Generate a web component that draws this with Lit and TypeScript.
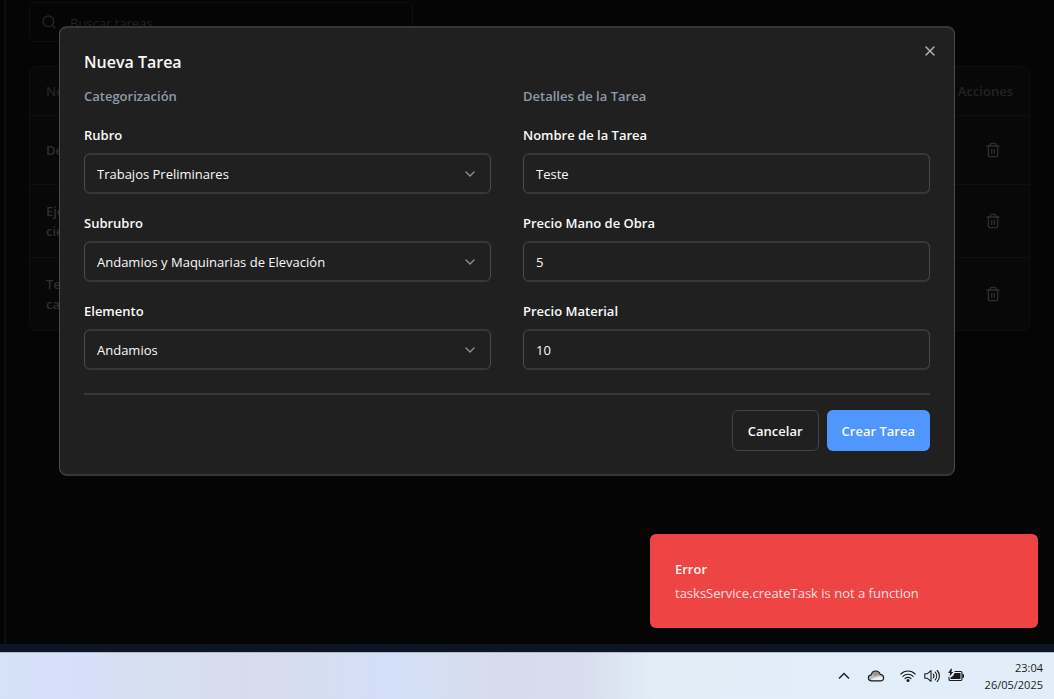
import { LitElement, html, css, svg } from "lit";
import { customElement } from "lit/decorators.js";

interface Choice {
  id: string;
  label: string;
  value: string;
}

const CATEGORIES: Choice[] = [
  { id: "rubro", label: "Rubro", value: "Trabajos Preliminares" },
  { id: "subrubro", label: "Subrubro", value: "Andamios y Maquinarias de Elevación" },
  { id: "elemento", label: "Elemento", value: "Andamios" },
];

const DETAILS: Choice[] = [
  { id: "nombre", label: "Nombre de la Tarea", value: "Teste" },
  { id: "mano-obra", label: "Precio Mano de Obra", value: "5" },
  { id: "material", label: "Precio Material", value: "10" },
];

const ROWS: string[][] = [["De"], ["Eje", "cie"], ["Te", "ca"]];

const lucide = (body: unknown, size = 16) => html`<svg
  width=${size}
  height=${size}
  viewBox="0 0 24 24"
  fill="none"
  stroke="currentColor"
  stroke-width="2"
  stroke-linecap="round"
  stroke-linejoin="round"
  aria-hidden="true"
>
  ${body}
</svg>`;

const SEARCH = svg`<circle cx="11" cy="11" r="8"/><path d="m21 21-4.3-4.3"/>`;
const TRASH = svg`<path d="M3 6h18"/><path d="M19 6v14c0 1-1 2-2 2H7c-1 0-2-1-2-2V6"/><path d="M8 6V4c0-1 1-2 2-2h4c1 0 2 1 2 2v2"/><path d="M10 11v6"/><path d="M14 11v6"/>`;
const CLOSE = svg`<path d="M18 6 6 18"/><path d="m6 6 12 12"/>`;
const CHEVRON = svg`<path d="m6 9 6 6 6-6"/>`;

@customElement("task-page")
class TaskPage extends LitElement {
  static styles = css`
    :host { display: flex; height: 100%; }
    .rail { width: 4px; flex: none; background: #040404; border-right: 2px solid #0d0d0d; }
    .content { flex: 1; padding: 2px 24px 24px 23px; }
    .search {
      display: flex; align-items: center; gap: 13px; box-sizing: border-box;
      width: 384px; max-width: 100%; height: 40px; padding: 0 11px;
      border: 1px solid #0f0f0f; border-radius: 6px; color: #262626;
    }
    .search input {
      flex: 1; min-width: 0; border: 0; padding: 2px 0 0; background: none; font: inherit; color: #262626;
    }
    .search input::placeholder { color: #222222; opacity: 1; }
    .card {
      margin-top: 24px; border: 1px solid #0f0f0f; border-radius: 8px; background: #080808; overflow: hidden;
    }
    table { width: 100%; border-collapse: collapse; }
    th, td { padding: 16px; font-weight: 600; text-align: left; vertical-align: middle; line-height: 20px; }
    th { height: 48px; padding: 0 16px; color: #222222; }
    td { color: #2f2f2f; }
    tbody tr { border-top: 1px solid #0f0f0f; }
    .actions { text-align: right; }
    .actions button {
      display: inline-grid; place-items: center; width: 40px; height: 36px; padding: 0;
      border: 0; background: none; color: #2e2e2e; vertical-align: middle;
    }
    .line { display: block; }
  `;

  render() {
    return html`
      <div class="rail"></div>
      <div class="content">
        <div class="search">
          ${lucide(SEARCH)}
          <input type="search" aria-label="Buscar tareas" placeholder="Buscar tareas..." />
        </div>
        <div class="card">
          <table>
            <thead>
              <tr><th>No</th><th class="actions">Acciones</th></tr>
            </thead>
            <tbody>
              ${ROWS.map(
                (lines) => html`<tr>
                  <td>${lines.map((l) => html`<span class="line">${l}</span>`)}</td>
                  <td class="actions"><button aria-label="Eliminar">${lucide(TRASH)}</button></td>
                </tr>`
              )}
            </tbody>
          </table>
        </div>
      </div>
    `;
  }
}

@customElement("task-dialog")
class TaskDialog extends LitElement {
  static styles = css`
    :host { display: block; width: 100%; max-width: 896px; }
    .dialog {
      position: relative; box-sizing: border-box; padding: 24px 24px 23px;
      background: #202020; color: #fafafa;
      border: solid; border-width: 2px 1px; border-color: #373737 #4a4a4a; border-radius: 8px;
    }
    h2 { margin: 0 0 14px; font-size: 16px; line-height: 20px; font-weight: 600; }
    h3 { margin: 0; font-size: 13px; line-height: 20px; font-weight: 600; color: #8f9bab; }
    .close {
      position: absolute; top: 15px; right: 16px; display: grid; padding: 0;
      border: 0; background: none; color: #b5b5b5;
    }
    .columns { display: grid; grid-template-columns: 1fr 1fr; gap: 32px; }
    .column { display: grid; gap: 19px; min-width: 0; }
    .field { display: grid; gap: 8px; }
    label { line-height: 20px; font-weight: 600; }
    .control { display: grid; align-items: center; }
    .control > * { grid-area: 1 / 1; }
    .control svg { justify-self: end; margin-right: 13px; color: #8f8f8f; pointer-events: none; }
    select, input {
      appearance: none; box-sizing: border-box; width: 100%; height: 41px; margin: 0; padding: 0 12px;
      background: #202020; color: #fafafa; font: inherit;
      border: solid; border-width: 2px 1px; border-color: #373737 #4a4a4a; border-radius: 6px;
    }
    .footer {
      display: flex; justify-content: flex-end; gap: 8px;
      margin-top: 23px; padding-top: 15px; border-top: 2px solid #373737;
    }
    .btn {
      height: 41px; padding: 0 15px; border-radius: 6px; font: inherit; font-weight: 600;
      color: #fafafa; background: #202020; border: 1px solid #434343;
    }
    .primary { background: #5096ff; border: 0; }
  `;

  render() {
    return html`
      <form class="dialog" role="dialog" aria-labelledby="title" @submit=${(e: Event) => e.preventDefault()}>
        <h2 id="title">Nueva Tarea</h2>
        <button class="close" type="button" aria-label="Cerrar">${lucide(CLOSE)}</button>
        <div class="columns">
          <div class="column">
            <h3>Categorización</h3>
            ${CATEGORIES.map(
              (c) => html`<div class="field">
                <label for=${c.id}>${c.label}</label>
                <div class="control">
                  <select id=${c.id}><option>${c.value}</option></select>
                  ${lucide(CHEVRON)}
                </div>
              </div>`
            )}
          </div>
          <div class="column">
            <h3>Detalles de la Tarea</h3>
            ${DETAILS.map(
              (d) => html`<div class="field">
                <label for=${d.id}>${d.label}</label>
                <input id=${d.id} type="text" .value=${d.value} />
              </div>`
            )}
          </div>
        </div>
        <div class="footer">
          <button class="btn" type="button">Cancelar</button>
          <button class="btn primary" type="submit">Crear Tarea</button>
        </div>
      </form>
    `;
  }
}

@customElement("task-bar")
class TaskBar extends LitElement {
  static styles = css`
    :host {
      display: flex; align-items: center; justify-content: flex-end; box-sizing: border-box;
      height: 47px; padding-right: 11px; border-top: 1px solid #b4bcc8; color: #1a1a1a;
      background: linear-gradient(90deg, #d6e2f8 0%, #d5dff9 8%, #d6dff1 11%, #d6dff0 17%, #d9dbec 23%,
        #d5def2 31%, #d3dff8 37%, #d4dff1 42%, #d8daed 48%, #d8deed 56%, #e2edf8 62%, #e1eef9 100%);
    }
    svg { display: block; }
    .tray { display: flex; align-items: center; }
    .up { margin-right: 15px; }
    .cloud { margin-right: 15px; }
    .status { display: flex; gap: 8px; margin-right: 17px; }
    .clock { min-width: 62px; font-size: 11px; line-height: 17px; text-align: right; }
    .clock time { display: block; }
  `;

  render() {
    return html`
      <div class="tray">
        <svg class="up" width="16" height="16" fill="none" stroke="#1a1a1a" stroke-width="1.4">
          <path d="M3 10.500 8 5.500l5 5" />
        </svg>
        <svg class="cloud" width="18" height="16">
          <path d="M4.600 12.900C2.600 12.900 1.400 11.600 1.400 9.900C1.400 8.200 2.600 7.100 4.100 6.900C4.700 4.500 6.400 3 8.700 3C10.900 3 12.600 4.300 13.200 6.300C15.300 6.500 16.600 7.900 16.600 9.700C16.600 11.600 15.300 12.900 13.300 12.900Z" fill="#bcbcbc" />
          <path d="M4.100 6.900C5.500 6.400 7 7.400 8.600 8L13.200 6.300C12.600 4.300 10.900 3 8.700 3C6.400 3 4.700 4.500 4.100 6.900Z" fill="#969696" />
          <path d="M3.500 12.500L6 10.300L10.500 8.800C13 8 15.800 9 16 10.500C15.700 11.800 14.600 12.500 13.300 12.500Z" fill="#efefef" />
          <path d="M4.600 12.900C2.600 12.900 1.400 11.600 1.400 9.900C1.400 8.200 2.600 7.100 4.100 6.900C4.700 4.500 6.400 3 8.700 3C10.900 3 12.600 4.300 13.200 6.300C15.300 6.500 16.600 7.900 16.600 9.700C16.600 11.600 15.300 12.900 13.300 12.900Z" fill="none" stroke="#1a1a1a" stroke-width="1.200" />
        </svg>
        <div class="status">
          <svg width="16" height="16" fill="none" stroke="#1a1a1a" stroke-width="1.100" stroke-linecap="round">
            <path d="M.8 6.200C4.800 2 11.200 2 15.200 6.200" />
            <path d="M2.900 8.400C5.700 5.500 10.300 5.500 13.100 8.400" />
            <path d="M5 10.600C6.700 8.900 9.300 8.900 11 10.600" />
            <circle cx="8" cy="12.400" r="1.500" fill="#1a1a1a" stroke="none" />
          </svg>
          <svg width="16" height="16" fill="none" stroke="#1a1a1a" stroke-width="1.100" stroke-linecap="round" stroke-linejoin="round">
            <path d="M.8 5.700h2.600L7 2.700v10.600L3.400 10.300H.8z" />
            <path d="M9.200 6c1 1.200 1 2.800 0 4" />
            <path d="M11.200 4.200c2 2.200 2 5.400 0 7.600" />
            <path d="M13.200 2.500c3 3.200 3 7.800 0 11" />
          </svg>
          <svg width="16" height="16">
            <path d="M6.500 3.500h6.300c.8 0 1.200.5 1.200 1.200v6.600c0 .8-.5 1.200-1.200 1.200H2.200c-.8 0-1.200-.5-1.200-1.200V9" fill="none" stroke="#1a1a1a" stroke-width="1.100" />
            <path d="M6.600 5h5.900v6h-10V9.600L5 8z" fill="#1a1a1a" />
            <path d="M14.300 6.300h1.700v3.400h-1.700z" fill="#1a1a1a" />
            <path d="M2.900.8.200 5h2L1.500 8.600 5.400 3.900H3.400L4 .8z" fill="#1a1a1a" />
          </svg>
        </div>
        <div class="clock"><time>23:04</time><time>26/05/2025</time></div>
      </div>
    `;
  }
}

@customElement("app-root")
class AppRoot extends LitElement {
  static styles = css`
    :host {
      display: flex; flex-direction: column; height: 100vh; overflow: hidden;
      font-family: "Open Sans", "Noto Sans", sans-serif; font-size: 13px;
    }
    .screen { position: relative; flex: 1; min-height: 0; overflow: hidden; background: #050505; }
    .overlay {
      position: absolute; inset: 0; display: flex; justify-content: center; align-items: flex-start;
      padding: 26px 40px 0 0;
    }
    .toast {
      position: absolute; right: 16px; bottom: 16px; box-sizing: border-box; width: 388px; max-width: 100%;
      display: grid; gap: 4px; padding: 25px; border-radius: 6px; line-height: 20px;
      background: #ef4444; color: #fafafa;
    }
    .toast strong { font-weight: 600; }
    .toast span { color: #fde0e0; }
    .strip { height: 8px; flex: none; background: #0d1424; }
    task-bar { flex: none; }
  `;

  render() {
    return html`
      <main class="screen">
        <task-page></task-page>
        <div class="overlay"><task-dialog></task-dialog></div>
        <div class="toast" role="alert">
          <strong>Error</strong>
          <span>tasksService.createTask is not a function</span>
        </div>
      </main>
      <div class="strip"></div>
      <task-bar></task-bar>
    `;
  }
}
